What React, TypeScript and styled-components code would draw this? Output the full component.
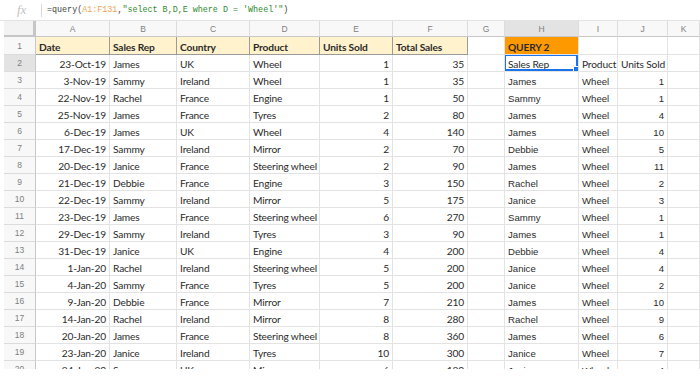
import React from 'react';
import styled, {createGlobalStyle, css} from 'styled-components';

const GlobalStyle = createGlobalStyle`
    body {
        margin: 0;
        background: #fff;
    }
`;

const COLS = ['A', 'B', 'C', 'D', 'E', 'F', 'G', 'H', 'I', 'J', 'K'];

// date, rep, country, product, units, total
const SALES: [string, string, string, string, number, number][] = [
    ['23-Oct-19', 'James', 'UK', 'Wheel', 1, 35],
    ['3-Nov-19', 'Sammy', 'Ireland', 'Wheel', 1, 35],
    ['22-Nov-19', 'Rachel', 'France', 'Engine', 1, 50],
    ['25-Nov-19', 'James', 'France', 'Tyres', 2, 80],
    ['6-Dec-19', 'James', 'UK', 'Wheel', 4, 140],
    ['17-Dec-19', 'Sammy', 'Ireland', 'Mirror', 2, 70],
    ['20-Dec-19', 'Janice', 'France', 'Steering wheel', 2, 90],
    ['21-Dec-19', 'Debbie', 'France', 'Engine', 3, 150],
    ['22-Dec-19', 'Sammy', 'Ireland', 'Mirror', 5, 175],
    ['23-Dec-19', 'James', 'France', 'Steering wheel', 6, 270],
    ['29-Dec-19', 'Sammy', 'Ireland', 'Tyres', 3, 90],
    ['31-Dec-19', 'Janice', 'UK', 'Engine', 4, 200],
    ['1-Jan-20', 'Rachel', 'Ireland', 'Steering wheel', 5, 200],
    ['4-Jan-20', 'Sammy', 'France', 'Tyres', 5, 200],
    ['9-Jan-20', 'Debbie', 'France', 'Mirror', 7, 210],
    ['14-Jan-20', 'Rachel', 'Ireland', 'Mirror', 8, 280],
    ['20-Jan-20', 'James', 'France', 'Steering wheel', 8, 360],
    ['23-Jan-20', 'Janice', 'Ireland', 'Tyres', 10, 300],
    ['24-Jan-20', 'Sammy', 'UK', 'Mirror', 6, 180],
];

// query result, starting on row 3
const QUERY: [string, number][] = [
    ['James', 1], ['Sammy', 1], ['James', 4], ['James', 10], ['Debbie', 5],
    ['James', 11], ['Rachel', 2], ['Janice', 3], ['Sammy', 1], ['James', 1],
    ['Debbie', 4], ['Janice', 4], ['Janice', 2], ['James', 10], ['Rachel', 9],
    ['James', 6], ['Janice', 7], ['Janice', 4],
];

const calibri = `Lato, "Open Sans", sans-serif`;
const arial = `"Liberation Sans", Arial, sans-serif`;

const FormulaBar = styled.div`
    display: flex;
    align-items: center;
    height: 21px;
    box-sizing: border-box;
    border-bottom: 1px solid #e3e3e3;
`;

const FxLabel = styled.span`
    width: 41px;
    padding-left: 17px;
    box-sizing: border-box;
    font-family: "Liberation Serif", serif;
    font-style: italic;
    font-size: 13px;
    color: #c2c2c2;
`;

const Divider = styled.span`
    width: 1px;
    height: 13px;
    background: #dadada;
    margin-right: 5px;
`;

const Formula = styled.span`
    font-family: "Liberation Mono", monospace;
    font-size: 8.4px;
    color: #444;
    white-space: pre;
`;

const Ref = styled.span`
    color: #f0a050;
`;

const Str = styled.span`
    color: #2e8b2e;
`;

const Sheet = styled.div`
    display: grid;
    grid-template-columns: 4px 32px 74px 67px 73px 70px 73px 75px 37px 74px 39px 50px 32px;
    grid-template-rows: 16px 18px repeat(19, 17px);
    height: 348px;
    overflow: hidden;
`;

const Gutter = styled.div`
    background: #fff;
`;

const Corner = styled.div`
    background: #f3f3f3;
    border-right: 3px solid #c6c6c6;
    border-bottom: 2px solid #c6c6c6;
`;

const headerBase = css<{$active?: boolean}>`
    display: flex;
    align-items: center;
    justify-content: center;
    font-family: ${arial};
    font-size: 8.5px;
    color: #808080;
    background: ${(p) => (p.$active ? '#e3e3e3' : '#f8f8f8')};
`;

const ColHead = styled.div<{$active?: boolean}>`
    ${headerBase};
    border-right: 1px solid #dcdcdc;
    border-bottom: 1px solid #c8c8c8;
`;

const RowHead = styled.div<{$active?: boolean}>`
    ${headerBase};
    border-right: 1px solid #c8c8c8;
    border-bottom: 1px solid #dcdcdc;
`;

type CellProps = {
    $right?: boolean;
    $bold?: boolean;
    $arial?: boolean;
    $fill?: string;
    $lined?: boolean;
};

const Cell = styled.div<CellProps>`
    position: relative;
    display: flex;
    align-items: flex-end;
    justify-content: ${(p) => (p.$right ? 'flex-end' : 'flex-start')};
    padding: 0 3px 1px 3px;
    overflow: hidden;
    white-space: nowrap;
    font-family: ${(p) => (p.$arial ? arial : calibri)};
    font-size: ${(p) => (p.$arial ? '9.6px' : '10.2px')};
    letter-spacing: ${(p) => (p.$arial ? '0' : '-0.15px')};
    font-weight: ${(p) => (p.$bold ? 700 : 400)};
    color: #2b2b2b;
    background: ${(p) => p.$fill || '#fff'};
    border-right: 1px solid ${(p) => (p.$lined ? '#9a9a9a' : '#e3e3e3')};
    border-bottom: 1px solid ${(p) => (p.$lined ? '#9a9a9a' : '#e3e3e3')};
`;

const Selection = styled.div`
    position: absolute;
    inset: -1px 0 0 -1px;
    border: 2px solid #1a73e8;

    &::after {
        content: '';
        position: absolute;
        right: -4px;
        bottom: -4px;
        width: 5px;
        height: 5px;
        background: #1a73e8;
        border: 1px solid #fff;
    }
`;

const HEADERS = ['Date', 'Sales Rep', 'Country', 'Product', 'Units Sold', 'Total Sales'];

function App() {
    const rows: React.ReactNode[] = [];

    rows.push(
        <React.Fragment key='h'>
            <Gutter/>
            <Corner/>
            {COLS.map((c) => (
                <ColHead
                    key={c}
                    $active={c === 'H'}
                >
                    {c}
                </ColHead>
            ))}
        </React.Fragment>,
    );

    rows.push(
        <React.Fragment key='r1'>
            <Gutter/>
            <RowHead>{1}</RowHead>
            {HEADERS.map((h) => (
                <Cell
                    key={h}
                    $bold={true}
                    $fill='#fff2cc'
                    $lined={true}
                >
                    {h}
                </Cell>
            ))}
            <Cell/>
            <Cell
                $bold={true}
                $fill='#ff9900'
            >
                {'QUERY 2'}
            </Cell>
            <Cell/>
            <Cell/>
            <Cell/>
        </React.Fragment>,
    );

    SALES.forEach((s, i) => {
        const n = i + 2;
        const q = n === 2 ? null : QUERY[n - 3];
        rows.push(
            <React.Fragment key={n}>
                <Gutter/>
                <RowHead $active={n === 2}>{n}</RowHead>
                <Cell $right={true}>{s[0]}</Cell>
                <Cell>{s[1]}</Cell>
                <Cell>{s[2]}</Cell>
                <Cell>{s[3]}</Cell>
                <Cell $right={true}>{s[4]}</Cell>
                <Cell $right={true}>{s[5]}</Cell>
                <Cell/>
                {q ? (
                    <>
                        <Cell $arial={true}>{q[0]}</Cell>
                        <Cell $arial={true}>{'Wheel'}</Cell>
                        <Cell
                            $arial={true}
                            $right={true}
                        >
                            {q[1]}
                        </Cell>
                    </>
                ) : (
                    <>
                        <Cell>
                            {'Sales Rep'}
                            <Selection/>
                        </Cell>
                        <Cell>{'Product'}</Cell>
                        <Cell>{'Units Sold'}</Cell>
                    </>
                )}
                <Cell/>
            </React.Fragment>,
        );
    });

    return (
        <>
            <GlobalStyle/>
            <FormulaBar>
                <FxLabel>{'fx'}</FxLabel>
                <Divider/>
                <Formula>
                    {'=query('}
                    <Ref>{'A1:F131'}</Ref>
                    {','}
                    <Str>{'"select B,D,E where D = \'Wheel\'"'}</Str>
                    {')'}
                </Formula>
            </FormulaBar>
            <Sheet>{rows}</Sheet>
        </>
    );
}

export default App;
